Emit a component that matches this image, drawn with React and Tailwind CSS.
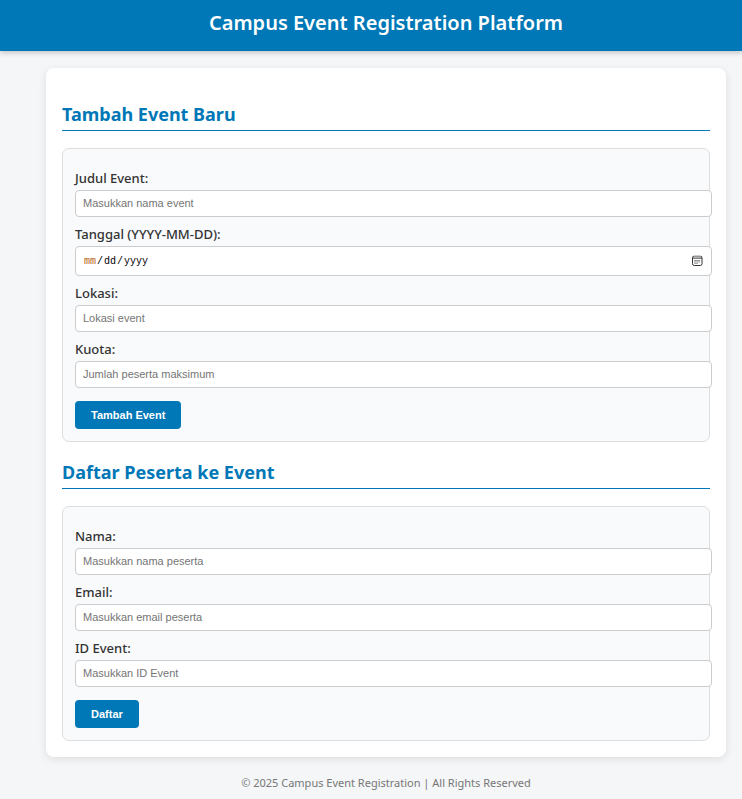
function CalendarIcon() {
  return (
    <svg
      viewBox="0 0 11 11"
      className="pointer-events-none absolute top-1/2 right-[-6px] h-[11px] w-[11px] -translate-y-1/2"
      fill="none"
      stroke="#333333"
      aria-hidden="true"
    >
      <rect x="0.5" y="0.5" width="9.5" height="9.5" rx="1.8" />
      <path d="M0.5 2.6H10" />
      <path
        d="M2.4 5H8.2M2.4 6.4H8.2M2.4 7.8H6"
        stroke="#555555"
        strokeWidth="0.9"
        strokeDasharray="1.3 0.7"
      />
    </svg>
  );
}

function Field({ id, label, type = "text", placeholder }) {
  const isDate = type === "date";
  return (
    <div className="mt-2">
      <label
        htmlFor={id}
        className="mb-[3px] block pt-px text-[13px] leading-[17px] font-medium text-[#333333]"
      >
        {label}
      </label>
      <div className="relative">
        <input
          id={id}
          type={type}
          placeholder={placeholder}
          className={
            "block w-[calc(100%+15px)] rounded-[4px] border border-[#cccccc] bg-white px-[7px] outline-none placeholder:text-[#757575] " +
            (isDate
              ? "h-[30px] font-['Liberation_Mono',monospace] text-[10px] text-black [&::-webkit-calendar-picker-indicator]:opacity-0 [&::-webkit-datetime-edit-month-field]:font-bold [&::-webkit-datetime-edit-month-field]:text-[#b86414]"
              : "h-[27px] pb-[2px] font-['Liberation_Sans',sans-serif] text-[11px]")
          }
        />
        {isDate && <CalendarIcon />}
      </div>
    </div>
  );
}

function Section({ title, button, children }) {
  return (
    <section className="mt-[17px]">
      <h2 className="mb-[17px] border-b border-[#0077b6] pt-px pb-[3px] text-[18px] leading-[25px] font-bold text-[#0077b6]">
        {title}
      </h2>
      <form
        onSubmit={(e) => e.preventDefault()}
        className="rounded-[7px] border border-[#dddddd] bg-[#f9fafc] p-3"
      >
        {children}
        <button
          type="submit"
          className="mt-[13px] block h-[28px] rounded-[4px] bg-[#0077b6] px-4 font-['Liberation_Sans',sans-serif] text-[11px] font-bold text-white"
        >
          {button}
        </button>
      </form>
    </section>
  );
}

export default function App() {
  return (
    <div className="min-h-screen bg-[#f4f6f8] font-['Noto_Sans','Segoe_UI',sans-serif]">
      <header className="bg-[#0077b6] pt-2 pb-[13px] pl-[30px] text-center shadow-[0_2px_5px_rgba(0,0,0,0.2)]">
        <h1 className="text-[20px] leading-[30px] font-semibold text-white">
          Campus Event Registration Platform
        </h1>
      </header>
      <div className="pr-4 pl-[46px]">
        <main className="mx-auto mt-[17px] max-w-[680px] rounded-[8px] bg-white p-4 pt-px shadow-[0_2px_8px_rgba(0,0,0,0.1)]">
          <div className="pt-[15px]">
            <Section title="Tambah Event Baru" button="Tambah Event">
              <Field id="judul" label="Judul Event:" placeholder="Masukkan nama event" />
              <Field id="tanggal" label="Tanggal (YYYY-MM-DD):" type="date" />
              <Field id="lokasi" label="Lokasi:" placeholder="Lokasi event" />
              <Field id="kuota" label="Kuota:" type="number" placeholder="Jumlah peserta maksimum" />
            </Section>
            <Section title="Daftar Peserta ke Event" button="Daftar">
              <Field id="nama" label="Nama:" placeholder="Masukkan nama peserta" />
              <Field id="email" label="Email:" type="email" placeholder="Masukkan email peserta" />
              <Field id="event" label="ID Event:" type="number" placeholder="Masukkan ID Event" />
            </Section>
          </div>
        </main>
      </div>
      <footer className="pt-[17px] pb-[7px] pl-[30px] text-center text-[11px] leading-[18px] text-[#777777]">
        © 2025 Campus Event Registration | All Rights Reserved
      </footer>
    </div>
  );
}
